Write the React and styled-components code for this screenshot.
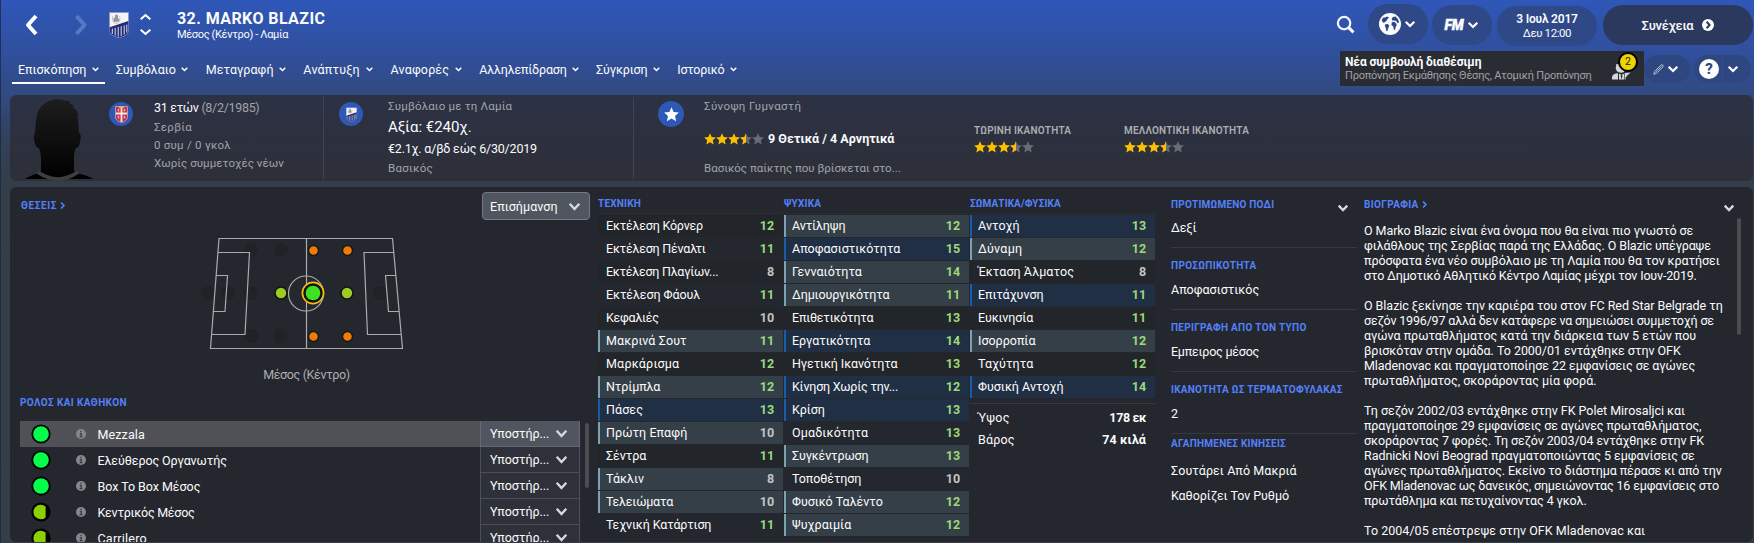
import React from 'react';
import styled, { createGlobalStyle, css } from 'styled-components';

const Global = createGlobalStyle`
  *, *::before, *::after { box-sizing: border-box; }
  body {
    margin: 0;
    background: #323c48;
    color: #fbfbfc;
    font-family: Roboto, "Liberation Sans", sans-serif;
    font-size: 12.5px;
  }
`;

const Page = styled.div`
  display: flex;
  flex-direction: column;
  width: 1754px;
  height: 543px;
  padding: 0 1px 0 10px;
  overflow: hidden;
  white-space: nowrap;
  background:
    linear-gradient(to right, rgba(24, 36, 54, 0.7) 1px, transparent 1px),
    linear-gradient(to bottom, #2f57b9 0, #30509f 50px, #314a80 95px, #31405c 140px, #333e4a 182px, #343d49 543px);
`;

/* ---------- shared text ---------- */

/* Optical letter-spacing per label, in px */
const TRACKING = {
  'Εκτέλεση Κόρνερ': -0.2,
  'Εκτέλεση Πέναλτι': -0.22,
  'Εκτέλεση Πλαγίων...': -0.25,
  'Εκτέλεση Φάουλ': -0.08,
  'Κεφαλιές': -0.29,
  'Μακρινά Σουτ': 0.09,
  'Μαρκάρισμα': 0.2,
  'Ντρίμπλα': -0.1,
  'Πάσες': 0.09,
  'Πρώτη Επαφή': 0.07,
  'Σέντρα': -0.06,
  'Τάκλιν': 0.05,
  'Τελειώματα': -0.2,
  'Τεχνική Κατάρτιση': -0.12,
  'Αντίληψη': -0.13,
  'Γενναιότητα': 0.05,
  'Δημιουργικότητα': -0.13,
  'Επιθετικότητα': -0.2,
  'Εργατικότητα': -0.05,
  'Ηγετική Ικανότητα': -0.1,
  'Κίνηση Χωρίς την...': -0.22,
  'Κρίση': -0.1,
  'Ομαδικότητα': 0.13,
  'Συγκέντρωση': -0.16,
  'Τοποθέτηση': -0.09,
  'Φυσικό Ταλέντο': -0.05,
  'Ψυχραιμία': 0.06,
  'Αντοχή': 0.03,
  'Δύναμη': 0.26,
  'Έκταση Άλματος': 0.07,
  'Ευκινησία': -0.07,
  'Ταχύτητα': 0.08,
  'Ύψος': 0.29,
  'Βάρος': 0.17,
  '178 εκ': -0.39,
  '74 κιλά': 0.09,
  'Δεξί': -0.1,
  'Εμπειρος μέσος': -0.23,
  'Σουτάρει Από Μακριά': 0.07,
  'Καθορίζει Τον Ρυθμό': -0.08,
  'ΠΡΟΤΙΜΩΜΕΝΟ ΠΟΔΙ': 0.21,
  'ΠΡΟΣΩΠΙΚΟΤΗΤΑ': 0.32,
  'ΠΕΡΙΓΡΑΦΗ ΑΠΟ ΤΟΝ ΤΥΠΟ': 0.29,
  'ΙΚΑΝΟΤΗΤΑ ΩΣ ΤΕΡΜΑΤΟΦΥΛΑΚΑΣ': 0.26,
  'ΑΓΑΠΗΜΕΝΕΣ ΚΙΝΗΣΕΙΣ': 0.23,
  'ΤΕΧΝΙΚΗ': 0.2,
  'ΨΥΧΙΚΑ': 0.24,
  'ΣΩΜΑΤΙΚΑ/ΦΥΣΙΚΑ': 0.1,
  'ΒΙΟΓΡΑΦΙΑ': 0.36,
  'ΡΟΛΟΣ ΚΑΙ ΚΑΘΗΚΟΝ': 0.4,
  'ΘΕΣΕΙΣ': 0.6,
  'ΤΩΡΙΝΗ ΙΚΑΝΟΤΗΤΑ': 0.18,
  'ΜΕΛΛΟΝΤΙΚΗ ΙΚΑΝΟΤΗΤΑ': 0.17,
  'Σερβία': 0.28,
  '0 συμ / 0 γκολ': 0.25,
  'Χωρίς συμμετοχές νέων': 0.05,
  'Συμβόλαιο με τη Λαμία': 0.18,
  'Βασικός': 0.28,
  '€2.1χ. α/βδ εώς 6/30/2019': -0.2,
  'Σύνοψη Γυμναστή': 0.38,
  '9 Θετικά / 4 Αρνητικά': 0.02,
  'Συμβόλαιο': -0.08,
  'Μεταγραφή': 0.08,
  'Ανάπτυξη': 0.2,
  'Αναφορές': 0.15,
  'Αλληλεπίδραση': -0.2,
  'Σύγκριση': -0.13,
  'Ιστορικό': -0.29,
  'Μέσος (Κέντρο)': -0.36,
  'Επισήμανση': 0.07,
  'Mezzala': 0.11,
  'Ελεύθερος Οργανωτής': -0.09,
  'Box To Box Μέσος': -0.05,
  'Κεντρικός Μέσος': -0.26,
  'Carrilero': 0.22,
};

const Text = styled.span`
  display: block;
  letter-spacing: ${(p) => p.$ls ?? TRACKING[p.children] ?? 0}px;
`;

const Heading = styled(Text)`
  font-size: 10px;
  line-height: 12px;
  padding-top: 1px;
  font-weight: 700;
  color: #5580fb;
`;

/* ---------- icons ---------- */

const Svg = styled.svg`
  display: block;
  flex: none;
  overflow: visible;
`;

const Chevron = ({ w = 10, h = 6, stroke = 2.2, color = '#fff', up }) => (
  <Svg width={w} height={h} viewBox={`0 0 ${w} ${h}`} fill="none" stroke={color} strokeWidth={stroke}>
    {up ? (
      <path d={`M0.7 ${h - 0.7} L${w / 2} 1 L${w - 0.7} ${h - 0.7}`} />
    ) : (
      <path d={`M0.7 0.7 L${w / 2} ${h - 1} L${w - 0.7} 0.7`} />
    )}
  </Svg>
);

const SideArrow = ({ dim }) => (
  <Svg width="14" height="22" viewBox="0 0 14 22" fill="none" stroke={dim ? '#5679c4' : '#fff'} strokeWidth="4">
    <path d={dim ? 'M1.500 2 L9.500 11 L1.500 20' : 'M12 2 L4 11 L12 20'} strokeLinejoin="round" />
  </Svg>
);

const Crest = ({ w, h }) => (
  <Svg width={w} height={h} viewBox="0 0 20 26">
    <path d="M0.5 0.5 H19.5 V18 C19.5 22.5 15 24.5 10 25.7 C5 24.5 0.5 22.5 0.5 18 Z" fill="#f3f4f8" stroke="#8d95b8" strokeWidth="0.6" />
    <path d="M0.6 15.2 L19.4 9 V18 C19.4 22.5 15 24.4 10 25.5 C5 24.4 0.6 22.5 0.6 18 Z" fill="#232a76" />
    <path d="M3.3 16.6 V22 M6.2 15.8 V23.6 M9.2 15 V24.6 M12.2 14.2 V24 M15.2 13.4 V22.6 M17.8 12.6 V20.5" stroke="#dfe3f2" strokeWidth="1" />
    <path d="M3.6 4 C2.8 8.5 5 11 7 11.6 C10 11 11.6 8.5 10.6 4" fill="none" stroke="#e5c96a" strokeWidth="1" />
    <path d="M4.5 10 V6.5 L6 5 V3.4 L7.2 2.2 L9 3.6 V6 L10.2 7.2 V9.6 Z" fill="#8b95bd" />
  </Svg>
);

const SerbiaArms = () => (
  <Svg width="13" height="17" viewBox="0 0 13 17">
    <path d="M0.5 0.5 H12.5 V11 C12.5 14 9.5 15.6 6.5 16.6 C3.5 15.6 0.5 14 0.5 11 Z" fill="#c52f46" stroke="#d9b9bd" strokeWidth="0.7" />
    <path d="M6.5 1 V16 M1 7.5 H12" stroke="#f4e9ea" strokeWidth="1.8" />
    <path d="M3.5 2.8 v2.6 M9.5 2.8 v2.6 M3.5 9.8 v2.6 M9.5 9.8 v2.6" stroke="#e9b7bd" strokeWidth="1.4" />
    <path d="M4 1.2 H9" stroke="#d8bd76" strokeWidth="1.6" />
  </Svg>
);

const STAR = 'M6 0.2 L7.7 4 L11.9 4.4 L8.8 7.2 L9.7 11.4 L6 9.2 L2.3 11.4 L3.2 7.2 L0.1 4.4 L4.3 4 Z';

const StarsRow = styled.div`
  display: flex;
  height: 12px;
  flex: none;
`;

const Star = ({ fill }) => (
  <Svg width="12" height="12" viewBox="0 0 12 12">
    <path d={STAR} fill={fill === 1 ? '#fbc001' : '#696c74'} />
    {fill === 0.5 && <path d="M6 0.2 V9.2 L2.3 11.4 L3.2 7.2 L0.1 4.4 L4.3 4 Z" fill="#fbc001" />}
  </Svg>
);

const Rating = () => (
  <StarsRow>
    {[1, 1, 1, 0.5, 0].map((f, i) => (
      <Star key={i} fill={f} />
    ))}
  </StarsRow>
);

const SearchIcon = () => (
  <Svg width="18" height="18" viewBox="0 0 18 18" fill="none" stroke="#f6f8fd">
    <circle cx="7.1" cy="7.1" r="6.200" strokeWidth="2.2" />
    <path d="M11.7 11.7 L16.5 16.300" strokeWidth="3" />
  </Svg>
);

const GlobeIcon = () => (
  <Svg width="22" height="22" viewBox="0 0 22 22">
    <circle cx="11" cy="11" r="11" fill="#fafbfd" />
    <path
      d="M2.600 7 L4.400 4.600 L6.200 4.400 L8 3.600 L10 4.600 L8.400 6.200 L7.400 8 L5.800 9 L5 10 L3.600 9 Z M6.400 11.200 L8.600 11 L10.300 12.600 L9.400 14.800 L8.200 18.400 L7.200 17.600 L6.800 14.800 L5.800 13 Z M12.800 5.600 L14 4 L16.600 3.600 L19 6.200 L20 9 L18.800 10.600 L17.600 8.400 L16 7.600 L14.600 7.400 L13 7.400 Z M12.800 9.200 L15.400 8.800 L17.200 10.400 L17.800 12 L16.800 13.600 L16.200 16.600 L15 17 L14.200 13.600 L12.400 12 Z"
      fill="#2f4785"
    />
  </Svg>
);

const GoIcon = () => (
  <Svg width="12" height="12" viewBox="0 0 12 12">
    <circle cx="6" cy="6" r="6" fill="#fff" />
    <path d="M4.6 2.8 L7.6 6 L4.6 9.2" fill="none" stroke="#2c3a5e" strokeWidth="2" />
  </Svg>
);

const PencilIcon = () => (
  <Svg width="11" height="11" viewBox="0 0 11 11" fill="none" stroke="#c3c9d8" strokeWidth="0.9">
    <path d="M0.8 10.2 L1.6 7.4 L8 1 Q9 0.2 9.8 1.1 Q10.7 2 9.8 3 L3.5 9.4 Z M2.6 8.2 L8.4 2.5" />
  </Svg>
);

const AdvisorIcon = () => (
  <Svg width="20" height="18" viewBox="0 0 20 18">
    <path d="M4.400 1 Q3 5 4.600 8 Q8 11 12 9 L13 2 Z" fill="#d5d7da" />
    <path d="M0 16.500 V14 Q0.400 11.400 3.600 10.600 L6 10.300 V16.500 Z" fill="#d5d7da" />
    <path d="M7 10.600 L9.600 12 L12.200 10.600 V16.500 H7 Z" fill="#d5d7da" />
    <path d="M12.800 10 L18.600 9.400 L15.600 12.200 L13.600 14.600 V16.500 H12.800 Z" fill="#d5d7da" />
    <path d="M9.600 11.600 L10.500 13 L9.600 16.500 L8.700 13 Z" fill="#292c33" />
  </Svg>
);

const InfoDot = () => (
  <Svg width="10" height="10" viewBox="0 0 10 10">
    <circle cx="5" cy="5" r="5" fill="#85878b" />
    <path d="M5 1.8 V3.3 M3.8 4.6 H5.2 V7.8 M3.6 7.6 H6.5" stroke="#3a3c42" strokeWidth="1.3" fill="none" />
  </Svg>
);

const RoleDot = ({ half }) => (
  <Svg width="20" height="20" viewBox="0 0 20 20">
    <circle cx="10" cy="10" r="9.6" fill="#000" />
    {half ? (
      <path d="M14.6 4.6 V15.4 A7.3 7.3 0 1 1 14.6 4.6 Z" fill="#8cd000" />
    ) : (
      <circle cx="10" cy="10" r="7.8" fill="#04ff4b" />
    )}
  </Svg>
);

const Silhouette = () => (
  <Svg width="70" height="80" viewBox="0 0 70 80">
    <defs>
      <linearGradient id="bust" x1="0" y1="0" x2="0" y2="1">
        <stop offset="0" stopColor="#1d1d1d" />
        <stop offset="1" stopColor="#000" />
      </linearGradient>
    </defs>
    <path
      d="M0 80 Q4 77 12 74.5 L16 72 V60 Q16 54 14 49 Q11 49 9.5 43 Q8 36 10 33.5 Q11 19 12.500 14 Q16 5 24 2 Q32 -1 39 1.500 L45 2 L44 4 L49 6.500 L48 8.500 Q52 11 52.500 14 L54 16 L52.500 15.500 Q53.500 24 54 33.500 Q57 36 55 43 Q54 49 51 49 Q49 53 49 60 V72 L53 74.500 Q62 76 68.500 80 Z"
      fill="url(#bust)"
    />
    <path d="M12.500 73 Q33 87 53 73" fill="none" stroke="#3e3e3e" strokeWidth="3.6" />
  </Svg>
);

/* ---------- top bar ---------- */

const TopBar = styled.header`
  display: flex;
  justify-content: space-between;
  height: 50px;
`;

const NavSide = styled.div`
  display: flex;
  align-items: center;
  height: 50px;
  padding-left: 14px;
`;

const NavIcon = styled.div`
  display: flex;
  width: ${(p) => p.$w}px;
`;

const Steppers = styled.div`
  display: flex;
  flex-direction: column;
  justify-content: space-between;
  width: 37px;
  height: 21px;
  margin-bottom: 2px;
`;

const NameBlock = styled.div`
  display: flex;
  flex-direction: column;
  padding-top: 2px;
`;

const Name = styled(Text)`
  font-size: 16px;
  line-height: 17px;
  font-weight: 700;
`;

const SubName = styled(Text)`
  font-size: 11px;
  line-height: 15px;
`;

const ToolSide = styled.div`
  display: flex;
  align-items: flex-start;
`;

const SearchButton = styled.div`
  padding: 16px 13px 0 0;
`;

const Pill = styled.div`
  display: flex;
  align-items: center;
  justify-content: center;
  gap: ${(p) => p.$gap || 4}px;
  width: ${(p) => p.$w}px;
  height: 40px;
  margin-top: ${(p) => p.$top}px;
  margin-right: ${(p) => p.$mr || 0}px;
  padding-right: ${(p) => p.$pr || 0}px;
  border-radius: 20px;
  background: ${(p) => (p.$strong ? '#2c395e' : '#2f4887')};
`;

const DatePill = styled(Pill)`
  flex-direction: column;
  gap: 0;
  font-size: 11.5px;
  line-height: 14px;
`;

const DateDay = styled(Text)`
  font-size: 12px;
  font-weight: 600;
`;

const Brand = styled(Text)`
  font-size: 14px;
  font-weight: 900;
  font-style: italic;
  -webkit-text-stroke: 0.4px #fff;
`;

const ContinueLabel = styled(Text)`
  font-size: 13px;
  font-weight: 500;
`;

/* ---------- tab bar ---------- */

const TabBar = styled.nav`
  display: flex;
  justify-content: space-between;
  height: 45px;
`;

const Tabs = styled.div`
  display: flex;
  gap: 5.2px;
  padding-left: 2px;
`;

const Tab = styled.div`
  display: flex;
  align-items: center;
  gap: 6px;
  height: 34px;
  padding: 7px 6px 0;
  border-bottom: 2px solid ${(p) => (p.$active ? '#fff' : 'transparent')};
`;

const TabLabel = styled(Text)`
  width: ${(p) => p.$w}px;
  font-size: 12.5px;
  line-height: 16px;
`;

const TabTools = styled.div`
  display: flex;
  align-items: flex-start;
`;

const Advice = styled.div`
  position: relative;
  display: flex;
  justify-content: space-between;
  align-items: center;
  width: 304px;
  height: 35px;
  margin-top: 1px;
  padding: 0 12px 0 5px;
  background: #292c33;
`;

const AdviceTitle = styled(Text)`
  font-size: 12px;
  line-height: 13px;
  font-weight: 700;
`;

const AdviceBody = styled(Text)`
  font-size: 11px;
  line-height: 13px;
  color: #a0a2a5;
`;

const AdviceArt = styled.div`
  padding-top: 7px;
`;

const Badge = styled.div`
  position: absolute;
  top: 1px;
  right: 6px;
  width: 20px;
  height: 20px;
  border: 2px solid #000;
  border-radius: 50%;
  background: #ecd400;
  color: #222;
  font-size: 10.5px;
  line-height: 16px;
  text-align: center;
`;

const MiniPill = styled.div`
  display: flex;
  align-items: center;
  gap: ${(p) => p.$gap}px;
  width: ${(p) => p.$w}px;
  height: 28px;
  margin: 5px ${(p) => p.$mr}px 0 0;
  padding-left: ${(p) => p.$pl}px;
  border-radius: 14px;
  background: #2f4780;
`;

const HelpMark = styled.div`
  width: 20px;
  height: 20px;
  border-radius: 50%;
  background: #fff;
  color: #2f4780;
  font-size: 15px;
  font-weight: 800;
  line-height: 21px;
  text-align: center;
`;

const PillSplit = styled.div`
  width: 1px;
  height: 28px;
  margin: 0 1px 0 -1px;
  background: #2f4c8e;
`;

/* ---------- player summary ---------- */

const Summary = styled.section`
  display: flex;
  flex: none;
  height: 86px;
  margin-bottom: 6px;
  padding-left: 15px;
  border-radius: 6px;
  background: linear-gradient(to bottom, #2c3145, #2d3038);
`;

const Portrait = styled.div`
  width: 84px;
  padding-top: 4px;
`;

const SummaryBlock = styled.div`
  display: flex;
  align-items: flex-start;
  gap: ${(p) => p.$gap}px;
  width: ${(p) => p.$w}px;
  height: 82px;
  margin-top: 2px;
  border-right: ${(p) => (p.$last ? 'none' : '1px solid #40444f')};
`;

const Emblem = styled.div`
  display: flex;
  align-items: center;
  justify-content: center;
  flex: none;
  width: ${(p) => p.$size || 24}px;
  height: ${(p) => p.$size || 24}px;
  margin: ${(p) => p.$top || 5}px 0 0 ${(p) => p.$ml || 0}px;
  border-radius: 50%;
  background: #2e58b6;
`;

const Lines = styled.div`
  display: flex;
  flex-direction: column;
  padding-top: ${(p) => p.$top}px;
`;

const tones = {
  muted: css`font-size: 11.5px; color: #a2a4a8;`,
  mid: css`font-size: 12.5px; color: #fbfbfc;`,
  big: css`font-size: 15px; color: #fbfbfc;`,
};

const Line = styled(Text)`
  height: ${(p) => p.$h}px;
  line-height: ${(p) => p.$h}px;
  ${(p) => tones[p.$tone]}
`;

const Dim = styled.span`
  color: #a2a4a8;
`;

const Verdict = styled.div`
  display: flex;
  align-items: center;
  gap: 4px;
  height: 45px;
`;

const VerdictText = styled(Text)`
  font-size: 12.5px;
  font-weight: 700;
`;

const Ability = styled.div`
  width: 150px;
  padding-top: 30px;
`;

const AbilityTitle = styled(Text)`
  font-size: 10px;
  line-height: 11px;
  margin-bottom: 5px;
  font-weight: 600;
  color: #acaeb2;
`;

/* ---------- main panel ---------- */

const Main = styled.main`
  display: flex;
  flex: none;
  height: 355px;
  border-radius: 6px;
  overflow: hidden;
  background: #24272e;
`;

const PositionsPane = styled.section`
  width: 588px;
  padding-left: 10px;
`;

const PaneHead = styled.div`
  display: flex;
  justify-content: space-between;
  height: 45px;
  padding: 5px 8px 0 1px;
`;

const LinkHead = styled.div`
  display: flex;
  align-items: center;
  gap: 3px;
  height: 13px;
  margin-top: ${(p) => p.$top || 0}px;
`;

const LinkArrow = () => (
  <Svg width="5" height="7" viewBox="0 0 5 7" fill="none" stroke="#5580fb" strokeWidth="1.6">
    <path d="M1 0.5 L4 3.5 L1 6.500" />
  </Svg>
);

const HighlightSelect = styled.div`
  display: flex;
  align-items: center;
  justify-content: space-between;
  width: 108px;
  height: 28px;
  padding: 0 9px 0 7px;
  border: 1px solid #737a85;
  border-radius: 4px;
  background: #50565f;
`;

const PitchWrap = styled.div`
  display: flex;
  flex-direction: column;
  align-items: center;
  width: 572px;
`;

const PitchLabel = styled(Text)`
  margin: 18px 0 0 1px;
  line-height: 16px;
  font-size: 12.5px;
  color: #acaeb1;
`;

const RoleHeading = styled(Heading)`
  margin: 13px 0 12px;
`;

const RoleArea = styled.div`
  display: flex;
  gap: 5px;
`;

const RoleList = styled.div`
  width: 560px;
`;

const RoleRow = styled.div`
  display: flex;
  align-items: center;
  height: 26px;
  padding-left: 10.500px;
  background: ${(p) => (p.$on ? '#505156' : 'transparent')};
`;

const RoleName = styled(Text)`
  flex: 1;
  margin-left: 12px;
`;

const RoleInfo = styled.div`
  margin-left: 25px;
`;

const DutySelect = styled.div`
  display: flex;
  align-items: center;
  justify-content: space-between;
  width: 100px;
  height: 26px;
  padding: 0 12px 1px 9px;
  border: 1px solid ${(p) => (p.$on ? '#656b76' : '#4b4f5a')};
  border-top: none;
  background: ${(p) => (p.$on ? '#50555f' : '#2e3139')};
`;

const Scroll = styled.div`
  width: 4px;
  height: ${(p) => p.$h}px;
  margin-top: ${(p) => p.$top}px;
  border-radius: 2px;
  background: #4b4c50;
`;

const AttrColumn = styled.section`
  width: 185px;
  margin-right: 1px;
  padding-top: 10px;
`;

const AttrHead = styled(Heading)`
  height: 17px;
  margin-bottom: 1px;
  border-bottom: 1px solid #2a2c30;
`;

const kinds = {
  key: css`background: #202f44; border-left-color: #185dac;`,
  good: css`background: #353f47; border-left-color: #7ca2b4;`,
};

const AttrRow = styled.div`
  display: flex;
  align-items: center;
  justify-content: space-between;
  height: 22px;
  margin-bottom: 1px;
  padding: 0 9px 1px 6px;
  border-left: 2px solid transparent;
  background: ${(p) => (p.$odd ? '#222529' : 'transparent')};
  ${(p) => kinds[p.$kind]}
`;

const AttrValue = styled(Text)`
  font-size: 12.5px;
  font-weight: 700;
  color: ${(p) => (p.$v > 10 ? '#9bd97b' : '#c2c4c7')};
`;

const Measures = styled.div`
  margin-top: 5px;
  padding-top: 2px;
  border-top: 1px solid #37393d;
`;

const Measure = styled.div`
  display: flex;
  align-items: center;
  justify-content: space-between;
  height: 22px;
  padding: 0 9px 0 8px;
`;

const MeasureValue = styled(Text)`
  font-weight: 700;
  font-size: 12.5px;
`;

const TraitsPane = styled.section`
  width: 186px;
  margin: 0 7px 0 15px;
`;

const Trait = styled.div`
  height: ${(p) => p.$h}px;
  padding-top: ${(p) => p.$top}px;
  border-bottom: ${(p) => (p.$last ? 'none' : '1px solid #37393d')};
`;

const TraitHead = styled.div`
  display: flex;
  justify-content: space-between;
  height: 12px;
  padding-right: 9px;
`;

const HeadToggle = styled.div`
  height: 12px;
  padding-top: 7px;
`;

const TraitValue = styled(Text)`
  line-height: 25px;
  margin-top: ${(p) => p.$top}px;
`;

const BioPane = styled.section`
  width: 377px;
`;

const BioHead = styled.div`
  display: flex;
  justify-content: space-between;
  height: 31px;
  padding: 11px 7px 0 0;
`;

const BioBody = styled.div`
  display: flex;
  justify-content: space-between;
`;

const BioText = styled.div`
  padding-top: 5px;
`;

const BioLine = styled(Text)`
  height: 15px;
  line-height: 15px;
`;

/* ---------- data ---------- */

const TABS = [
  ['Επισκόπηση', 67.5],
  ['Συμβόλαιο', 59.8],
  ['Μεταγραφή', 67.5],
  ['Ανάπτυξη', 57],
  ['Αναφορές', 58.5],
  ['Αλληλεπίδραση', 86.7],
  ['Σύγκριση', 51],
  ['Ιστορικό', 46.5],
];

const DOTS = {
  empty: [[251, 250], [281, 250], [251, 336], [281, 336], [208, 293], [228, 293], [251, 293], [380, 293]],
  weak: [[313.5, 250.5], [347.5, 250.5], [313.5, 336.5], [347.5, 336.5]],
  decent: [[281, 293], [347, 293]],
};

const ROLES = [
  ['Mezzala', false],
  ['Ελεύθερος Οργανωτής', false],
  ['Box To Box Μέσος', false],
  ['Κεντρικός Μέσος', true],
  ['Carrilero', true],
];

const TECHNICAL = [
  ['Εκτέλεση Κόρνερ', 12],
  ['Εκτέλεση Πέναλτι', 11],
  ['Εκτέλεση Πλαγίων...', 8],
  ['Εκτέλεση Φάουλ', 11],
  ['Κεφαλιές', 10],
  ['Μακρινά Σουτ', 11, 'good'],
  ['Μαρκάρισμα', 12],
  ['Ντρίμπλα', 12, 'good'],
  ['Πάσες', 13, 'key'],
  ['Πρώτη Επαφή', 10, 'good'],
  ['Σέντρα', 11],
  ['Τάκλιν', 8, 'good'],
  ['Τελειώματα', 10, 'good'],
  ['Τεχνική Κατάρτιση', 11],
];

const MENTAL = [
  ['Αντίληψη', 12, 'good'],
  ['Αποφασιστικότητα', 15, 'key'],
  ['Γενναιότητα', 14, 'good'],
  ['Δημιουργικότητα', 11, 'good'],
  ['Επιθετικότητα', 13],
  ['Εργατικότητα', 14, 'key'],
  ['Ηγετική Ικανότητα', 13],
  ['Κίνηση Χωρίς την...', 12, 'key'],
  ['Κρίση', 13, 'key'],
  ['Ομαδικότητα', 13],
  ['Συγκέντρωση', 13, 'good'],
  ['Τοποθέτηση', 10],
  ['Φυσικό Ταλέντο', 12, 'good'],
  ['Ψυχραιμία', 12, 'good'],
];

const PHYSICAL = [
  ['Αντοχή', 13, 'key'],
  ['Δύναμη', 12, 'good'],
  ['Έκταση Άλματος', 8],
  ['Επιτάχυνση', 11, 'key'],
  ['Ευκινησία', 11],
  ['Ισορροπία', 12, 'good'],
  ['Ταχύτητα', 12],
  ['Φυσική Αντοχή', 14, 'key'],
];

/* each biography line with its letter-spacing */
const BIO = [
  ['Ο Marko Blazic είναι ένα όνομα που θα είναι πιο γνωστό σε', -0.06],
  ['φιλάθλους της Σερβίας παρά της Ελλάδας. Ο Blazic υπέγραψε', -0.11],
  ['πρόσφατα ένα νέο συμβόλαιο με τη Λαμία που θα τον κρατήσει', -0.04],
  ['στο Δημοτικό Αθλητικό Κέντρο Λαμίας μέχρι τον Ιουν-2019.', -0.17],
  ['', 0],
  ['Ο Blazic ξεκίνησε την καριέρα του στον FC Red Star Belgrade τη', -0.04],
  ['σεζόν 1996/97 αλλά δεν κατάφερε να σημειώσει συμμετοχή σε', -0.17],
  ['αγώνα πρωταθλήματος κατά την διάρκεια των 5 ετών που', -0.02],
  ['βρισκόταν στην ομάδα. Το 2000/01 εντάχθηκε στην OFK', -0.04],
  ['Mladenovac και πραγματοποίησε 22 εμφανίσεις σε αγώνες', -0.07],
  ['πρωταθλήματος, σκοράροντας μία φορά.', -0.01],
  ['', 0],
  ['Τη σεζόν 2002/03 εντάχθηκε στην FK Polet Mirosaljci και', -0.03],
  ['πραγματοποίησε 29 εμφανίσεις σε αγώνες πρωταθλήματος,', -0.09],
  ['σκοράροντας 7 φορές. Τη σεζόν 2003/04 εντάχθηκε στην FK', -0.08],
  ['Radnicki Novi Beograd πραγματοποιώντας 5 εμφανίσεις σε', -0.05],
  ['αγώνες πρωταθλήματος. Εκείνο το διάστημα πέρασε κι από την', -0.11],
  ['OFK Mladenovac ως δανεικός, σημειώνοντας 16 εμφανίσεις στο', -0.17],
  ['πρωτάθλημα και πετυχαίνοντας 4 γκολ.', -0.11],
  ['', 0],
  ['Το 2004/05 επέστρεψε στην OFK Mladenovac και', 0.03],
];

/* ---------- sections ---------- */

const Pitch = () => (
  <Svg width="212" height="117" viewBox="200 232 212 117" fill="none">
    {DOTS.empty.map(([x, y]) => (
      <circle key={`${x}-${y}`} cx={x} cy={y} r="7" fill="#202226" />
    ))}
    <g stroke="#a9abae" strokeWidth="1.2">
      <path d="M219 238.5 H392.500 L402.500 348.5 H210.500 Z M306.500 238.5 V348.5" />
      <path d="M218 252.5 H249.500 L245 334.5 H211.500 M216 275.5 H227.500 L225 311.5 H213.500" />
      <path d="M394 252.5 H364 L367.500 334.5 H401 M396 275.5 H385.500 L388.500 311.5 H399" />
      <circle cx="306" cy="293.5" r="17.5" />
    </g>
    {DOTS.weak.map(([x, y]) => (
      <circle key={`${x}-${y}`} cx={x} cy={y} r="5" fill="#f07b05" stroke="#15171b" strokeWidth="1.4" />
    ))}
    {DOTS.decent.map(([x, y]) => (
      <circle key={`${x}-${y}`} cx={x} cy={y} r="6" fill="#9dcc22" stroke="#121512" strokeWidth="1.6" />
    ))}
    <circle cx="313" cy="293" r="10.6" fill="#10140c" stroke="#f5bd0c" strokeWidth="1.7" />
    <circle cx="313" cy="293" r="7.300" fill="#3fe222" />
  </Svg>
);

const AttrTable = ({ title, rows, children }) => (
  <AttrColumn>
    <AttrHead>{title}</AttrHead>
    {rows.map(([name, value, kind], i) => (
      <AttrRow key={name} $kind={kind} $odd={i % 2 === 0}>
        <Text>{name}</Text>
        <AttrValue $v={value} $ls={-0.1}>{value}</AttrValue>
      </AttrRow>
    ))}
    {children}
  </AttrColumn>
);

export default function App() {
  return (
    <>
      <Global />
      <Page>
        <TopBar>
          <NavSide>
            <NavIcon $w={51}><SideArrow /></NavIcon>
            <NavIcon $w={34}><SideArrow dim /></NavIcon>
            <NavIcon $w={31}><Crest w={20} h={26} /></NavIcon>
            <Steppers>
              <Chevron up w={11} h={6} stroke={2} />
              <Chevron w={11} h={6} stroke={2} />
            </Steppers>
            <NameBlock>
              <Name $ls={0.42}>32. MARKO BLAZIC</Name>
              <SubName $ls={-0.35}>Μέσος (Κέντρο) - Λαμία</SubName>
            </NameBlock>
          </NavSide>
          <ToolSide>
            <SearchButton><SearchIcon /></SearchButton>
            <Pill $w={60} $top={4} $mr={4} $pr={2}>
              <GlobeIcon />
              <Chevron w={10} h={6} />
            </Pill>
            <Pill $w={60} $top={5} $mr={5} $gap={4} $pr={2}>
              <Brand $ls={-0.1}>FM</Brand>
              <Chevron w={10} h={6} />
            </Pill>
            <DatePill $w={100} $top={6} $mr={6}>
              <DateDay $ls={-0.2}>3 Ιουλ 2017</DateDay>
              <Text $ls={-0.42}>Δευ 12:00</Text>
            </DatePill>
            <Pill $w={150} $top={5} $gap={9} $strong>
              <ContinueLabel $ls={-0.23}>Συνέχεια</ContinueLabel>
              <GoIcon />
            </Pill>
          </ToolSide>
        </TopBar>

        <TabBar>
          <Tabs>
            {TABS.map(([label, w], i) => (
              <Tab key={label} $active={i === 0}>
                <TabLabel $w={w}>{label}</TabLabel>
                <Chevron w={7} h={4.5} stroke={1.5} />
              </Tab>
            ))}
          </Tabs>
          <TabTools>
            <Advice>
              <div>
                <AdviceTitle $ls={-0.12}>Νέα συμβουλή διαθέσιμη</AdviceTitle>
                <AdviceBody $ls={-0.21}>Προπόνηση Εκμάθησης Θέσης, Ατομική Προπόνηση</AdviceBody>
              </div>
              <AdviceArt><AdvisorIcon /></AdviceArt>
              <Badge>2</Badge>
            </Advice>
            <MiniPill $w={46} $mr={4} $pl={9} $gap={4}>
              <PencilIcon />
              <Chevron w={10} h={6} />
            </MiniPill>
            <MiniPill $w={57} $mr={2} $pl={5} $gap={4}>
              <HelpMark>?</HelpMark>
              <PillSplit />
              <Chevron w={10} h={6} />
            </MiniPill>
          </TabTools>
        </TabBar>

        <Summary>
          <Portrait><Silhouette /></Portrait>
          <SummaryBlock $w={215} $gap={21}>
            <Emblem><SerbiaArms /></Emblem>
            <Lines $top={1}>
              <Line $tone="mid" $h={20} $ls={-0.31}>31 ετών <Dim>(8/2/1985)</Dim></Line>
              <Line $tone="muted" $h={18}>Σερβία</Line>
              <Line $tone="muted" $h={18}>0 συμ / 0 γκολ</Line>
              <Line $tone="muted" $h={18}>Χωρίς συμμετοχές νέων</Line>
            </Lines>
          </SummaryBlock>
          <SummaryBlock $w={310} $gap={25}>
            <Emblem $ml={15}><Crest w={11} h={15} /></Emblem>
            <Lines $top={0}>
              <Line $tone="muted" $h={19}>Συμβόλαιο με τη Λαμία</Line>
              <Line $tone="big" $h={22} $ls={-0.02}>Αξία: €240χ.</Line>
              <Line $tone="mid" $h={21}>€2.1χ. α/βδ εώς 6/30/2019</Line>
              <Line $tone="muted" $h={18}>Βασικός</Line>
            </Lines>
          </SummaryBlock>
          <SummaryBlock $w={340} $gap={20} $last>
            <Emblem $ml={24} $size={26} $top={4}>
              <Svg width="15" height="15" viewBox="0 0 12 12"><path d={STAR} fill="#fff" /></Svg>
            </Emblem>
            <Lines $top={0}>
              <Line $tone="muted" $h={19}>Σύνοψη Γυμναστή</Line>
              <Verdict>
                <Rating />
                <VerdictText>9 Θετικά / 4 Αρνητικά</VerdictText>
              </Verdict>
              <Line $tone="muted" $h={15}>Βασικός παίκτης που βρίσκεται στο...</Line>
            </Lines>
          </SummaryBlock>
          <Ability>
            <AbilityTitle>ΤΩΡΙΝΗ ΙΚΑΝΟΤΗΤΑ</AbilityTitle>
            <Rating />
          </Ability>
          <Ability>
            <AbilityTitle>ΜΕΛΛΟΝΤΙΚΗ ΙΚΑΝΟΤΗΤΑ</AbilityTitle>
            <Rating />
          </Ability>
        </Summary>

        <Main>
          <PositionsPane>
            <PaneHead>
              <LinkHead $top={7}>
                <Heading>ΘΕΣΕΙΣ</Heading>
                <LinkArrow />
              </LinkHead>
              <HighlightSelect>
                <Text>Επισήμανση</Text>
                <Chevron w={11} h={7} color="#d6d8db" stroke={2.400} />
              </HighlightSelect>
            </PaneHead>
            <PitchWrap>
              <Pitch />
              <PitchLabel>Μέσος (Κέντρο)</PitchLabel>
            </PitchWrap>
            <RoleHeading>ΡΟΛΟΣ ΚΑΙ ΚΑΘΗΚΟΝ</RoleHeading>
            <RoleArea>
              <RoleList>
                {ROLES.map(([name, half], i) => (
                  <RoleRow key={name} $on={i === 0}>
                    <RoleDot half={half} />
                    <RoleInfo><InfoDot /></RoleInfo>
                    <RoleName>{name}</RoleName>
                    <DutySelect $on={i === 0}>
                      <Text $ls={-0.03}>Υποστήρ...</Text>
                      <Chevron w={11} h={7} color="#d6d8db" stroke={2.400} />
                    </DutySelect>
                  </RoleRow>
                ))}
              </RoleList>
              <Scroll $h={65} $top={2} />
            </RoleArea>
          </PositionsPane>

          <AttrTable title="ΤΕΧΝΙΚΗ" rows={TECHNICAL} />
          <AttrTable title="ΨΥΧΙΚΑ" rows={MENTAL} />
          <AttrTable title="ΣΩΜΑΤΙΚΑ/ΦΥΣΙΚΑ" rows={PHYSICAL}>
            <Measures>
              <Measure>
                <Text>Ύψος</Text>
                <MeasureValue>178 εκ</MeasureValue>
              </Measure>
              <Measure>
                <Text>Βάρος</Text>
                <MeasureValue>74 κιλά</MeasureValue>
              </Measure>
            </Measures>
          </AttrTable>

          <TraitsPane>
            <Trait $h={61} $top={11}>
              <TraitHead>
                <Heading>ΠΡΟΤΙΜΩΜΕΝΟ ΠΟΔΙ</Heading>
                <HeadToggle><Chevron color="#d6d8db" stroke={2.400} /></HeadToggle>
              </TraitHead>
              <TraitValue $top={4.5}>Δεξί</TraitValue>
            </Trait>
            <Trait $h={62} $top={11}>
              <Heading>ΠΡΟΣΩΠΙΚΟΤΗΤΑ</Heading>
              <TraitValue $top={4.5}>Αποφασιστικός</TraitValue>
            </Trait>
            <Trait $h={62} $top={11}>
              <Heading>ΠΕΡΙΓΡΑΦΗ ΑΠΟ ΤΟΝ ΤΥΠΟ</Heading>
              <TraitValue $top={4.5}>Εμπειρος μέσος</TraitValue>
            </Trait>
            <Trait $h={62} $top={11}>
              <Heading>ΙΚΑΝΟΤΗΤΑ ΩΣ ΤΕΡΜΑΤΟΦΥΛΑΚΑΣ</Heading>
              <TraitValue $top={4.5}>2</TraitValue>
            </Trait>
            <Trait $h={80} $top={3} $last>
              <Heading>ΑΓΑΠΗΜΕΝΕΣ ΚΙΝΗΣΕΙΣ</Heading>
              <TraitValue $top={7.5}>Σουτάρει Από Μακριά</TraitValue>
              <TraitValue $top={0}>Καθορίζει Τον Ρυθμό</TraitValue>
            </Trait>
          </TraitsPane>

          <BioPane>
            <BioHead>
              <LinkHead>
                <Heading>ΒΙΟΓΡΑΦΙΑ</Heading>
                <LinkArrow />
              </LinkHead>
              <HeadToggle><Chevron color="#d6d8db" stroke={2.400} /></HeadToggle>
            </BioHead>
            <BioBody>
              <BioText>
                {BIO.map(([line, ls], i) => (
                  <BioLine key={i} $ls={ls}>{line}</BioLine>
                ))}
              </BioText>
              <Scroll $h={117} $top={0} />
            </BioBody>
          </BioPane>
        </Main>
      </Page>
    </>
  );
}
